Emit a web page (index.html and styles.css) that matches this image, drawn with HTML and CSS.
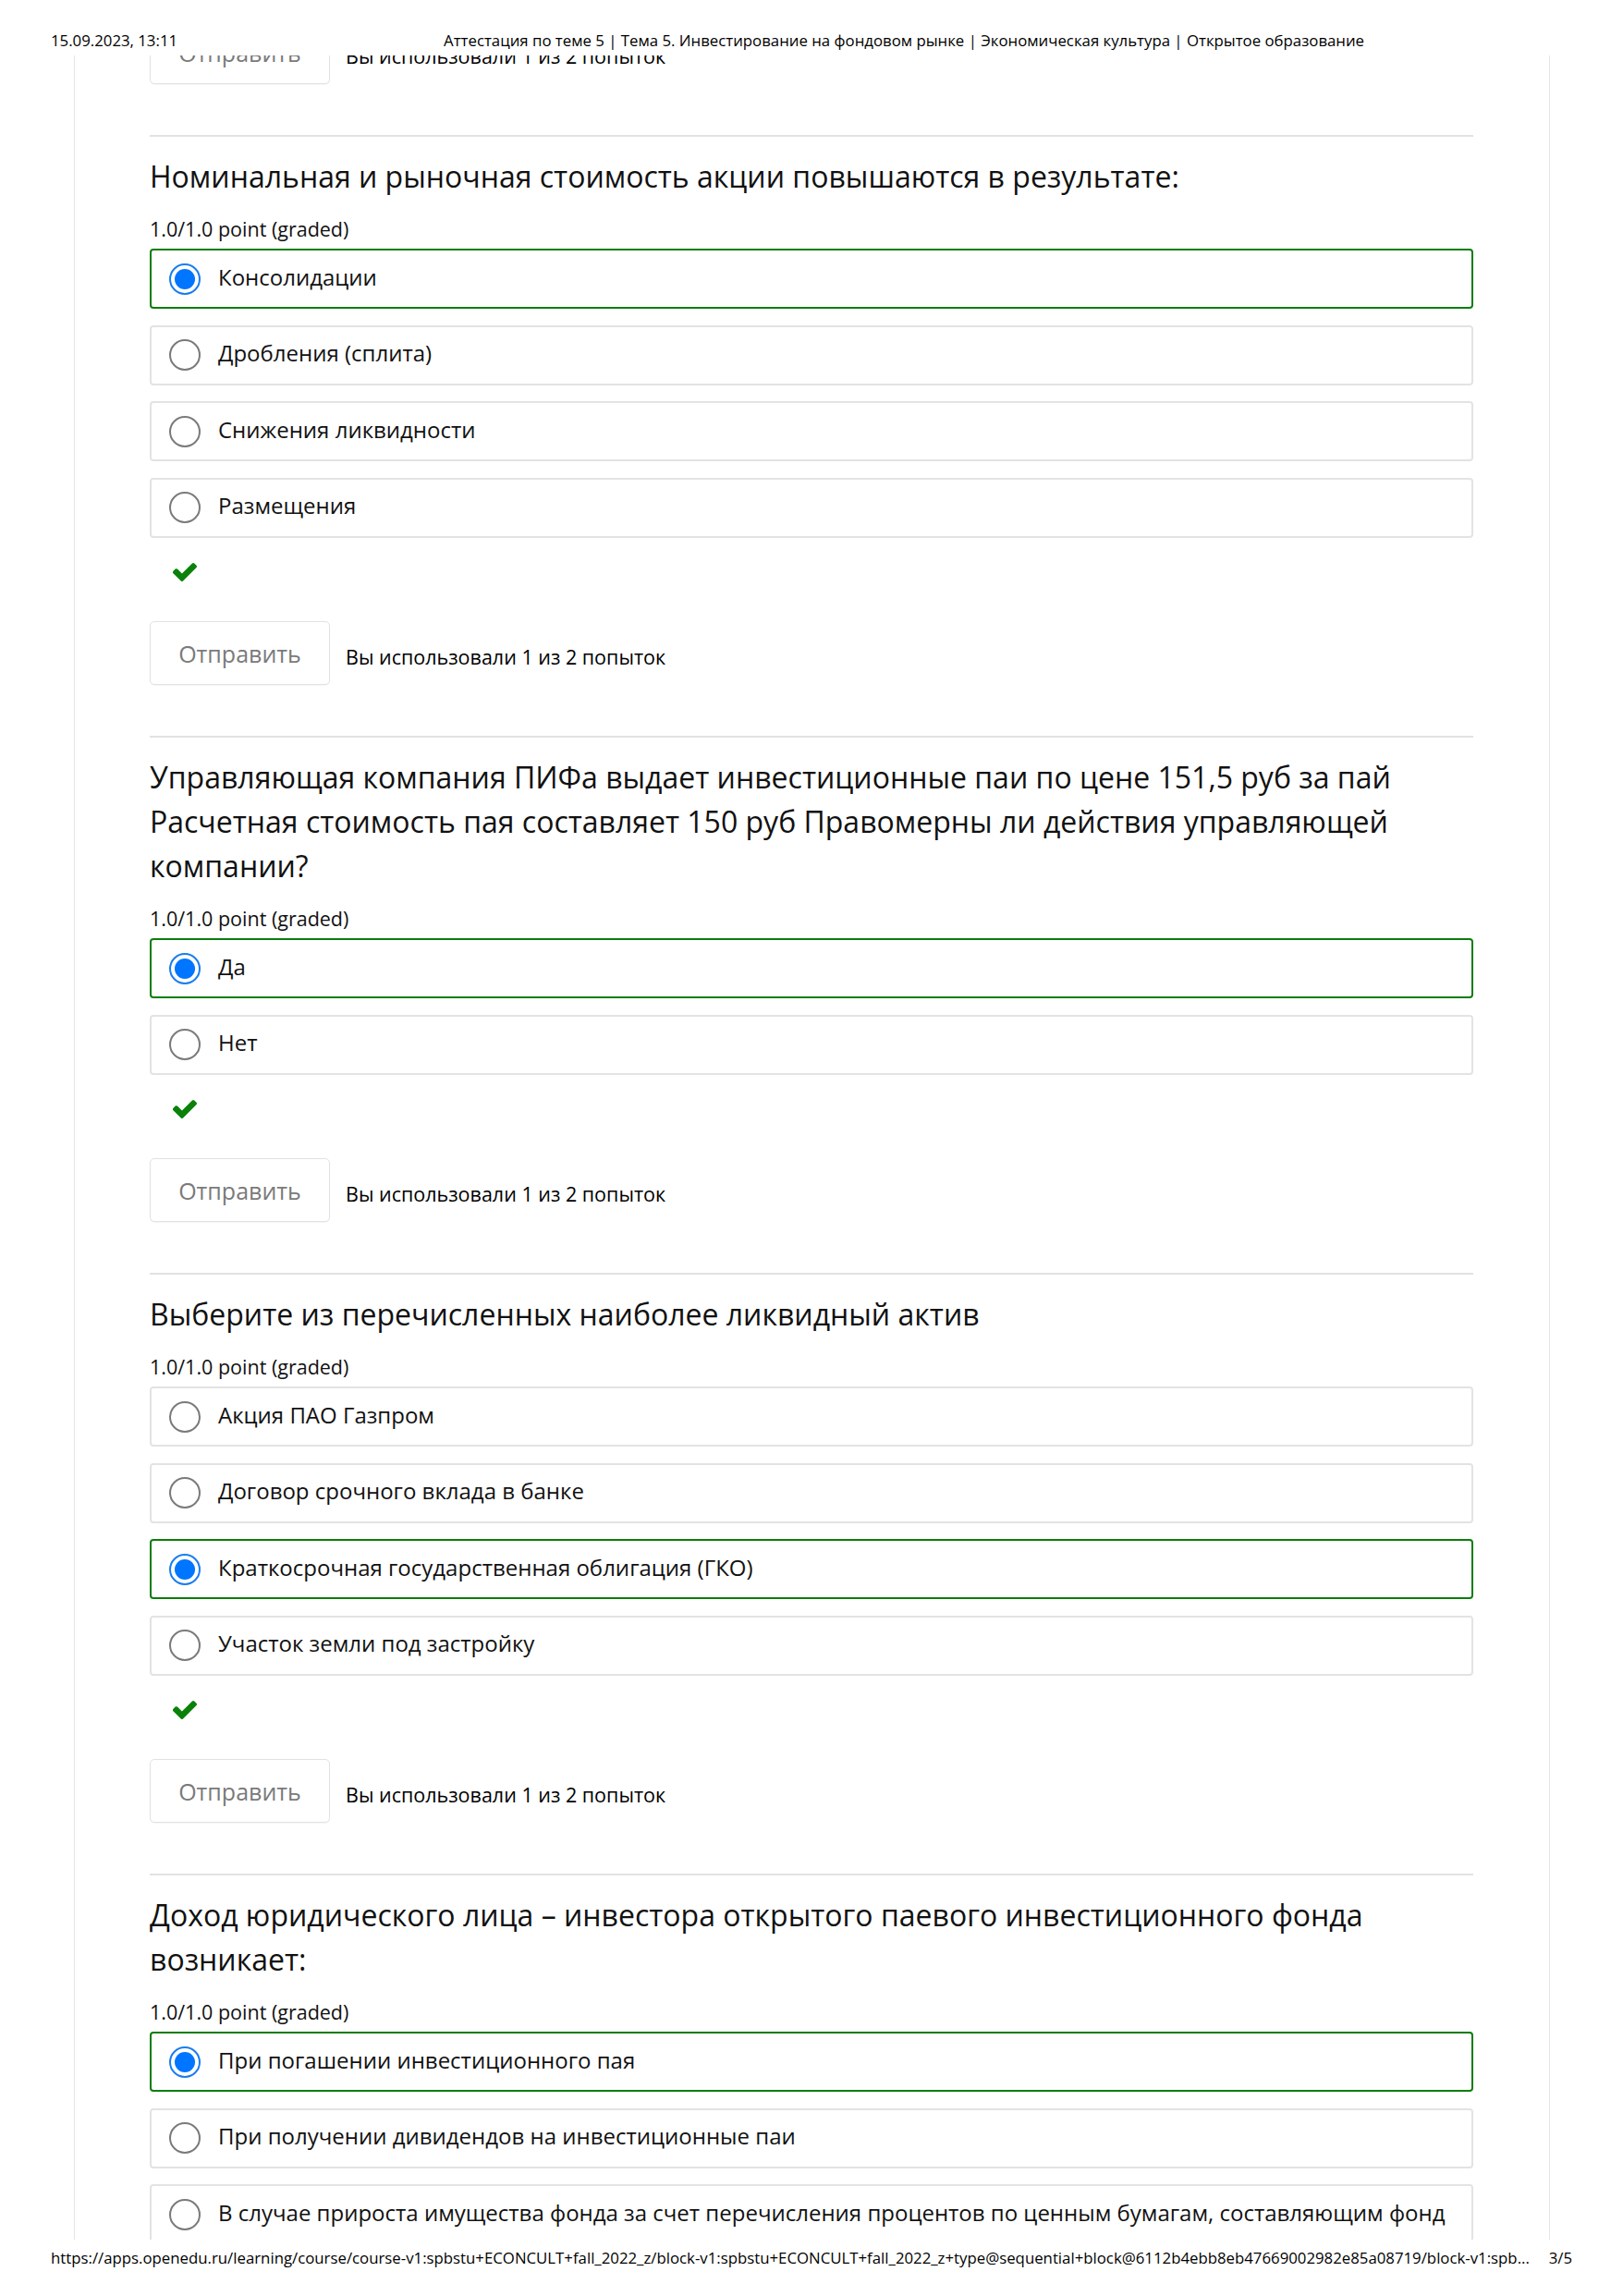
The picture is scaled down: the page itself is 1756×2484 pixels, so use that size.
FILE: index.html
```html
<!DOCTYPE html>
<html lang="ru">
<head>
<meta charset="utf-8">
<title>Аттестация по теме 5</title>
<link rel="stylesheet" href="styles.css">
</head>
<body>
<header class="print-head">
  <span class="print-date">15.09.2023, 13:11</span>
  <span class="print-title">Аттестация по теме 5 | Тема 5. Инвестирование на фондовом рынке | Экономическая культура | Открытое образование</span>
</header>

<main class="column">
  <div class="column-inner">
    <div class="actions actions-partial">
      <button class="submit" type="button">Отправить</button>
      <span class="attempts">Вы использовали 1 из 2 попыток</span>
    </div>

    <section class="problem">
      <h2 class="q-title">Номинальная и рыночная стоимость акции повышаются в результате:</h2>
      <div class="points">1.0/1.0 point (graded)</div>
      <div class="options">
        <div class="option correct"><span class="radio checked"></span><span class="opt-text">Консолидации</span></div>
        <div class="option"><span class="radio"></span><span class="opt-text">Дробления (сплита)</span></div>
        <div class="option"><span class="radio"></span><span class="opt-text">Снижения ликвидности</span></div>
        <div class="option"><span class="radio"></span><span class="opt-text">Размещения</span></div>
      </div>
      <div class="status"><svg class="check" viewBox="128 420 1543 1010" aria-hidden="true"><path d="M1671 566q0 40-28 68l-724 724-136 136q-28 28-68 28t-68-28l-136-136-362-362q-28-28-28-68t28-68l136-136q28-28 68-28t68 28l294 295 656-657q28-28 68-28t68 28l136 136q28 28 28 68z"/></svg></div>
      <div class="actions">
        <button class="submit" type="button">Отправить</button>
        <span class="attempts">Вы использовали 1 из 2 попыток</span>
      </div>
    </section>

    <section class="problem">
      <h2 class="q-title">Управляющая компания ПИФа выдает инвестиционные паи по цене 151,5 руб за пай<br>Расчетная стоимость пая составляет 150 руб Правомерны ли действия управляющей<br>компании?</h2>
      <div class="points">1.0/1.0 point (graded)</div>
      <div class="options">
        <div class="option correct"><span class="radio checked"></span><span class="opt-text">Да</span></div>
        <div class="option"><span class="radio"></span><span class="opt-text">Нет</span></div>
      </div>
      <div class="status"><svg class="check" viewBox="128 420 1543 1010" aria-hidden="true"><path d="M1671 566q0 40-28 68l-724 724-136 136q-28 28-68 28t-68-28l-136-136-362-362q-28-28-28-68t28-68l136-136q28-28 68-28t68 28l294 295 656-657q28-28 68-28t68 28l136 136q28 28 28 68z"/></svg></div>
      <div class="actions">
        <button class="submit" type="button">Отправить</button>
        <span class="attempts">Вы использовали 1 из 2 попыток</span>
      </div>
    </section>

    <section class="problem">
      <h2 class="q-title">Выберите из перечисленных наиболее ликвидный актив</h2>
      <div class="points">1.0/1.0 point (graded)</div>
      <div class="options">
        <div class="option"><span class="radio"></span><span class="opt-text">Акция ПАО Газпром</span></div>
        <div class="option"><span class="radio"></span><span class="opt-text">Договор срочного вклада в банке</span></div>
        <div class="option correct"><span class="radio checked"></span><span class="opt-text">Краткосрочная государственная облигация (ГКО)</span></div>
        <div class="option"><span class="radio"></span><span class="opt-text">Участок земли под застройку</span></div>
      </div>
      <div class="status"><svg class="check" viewBox="128 420 1543 1010" aria-hidden="true"><path d="M1671 566q0 40-28 68l-724 724-136 136q-28 28-68 28t-68-28l-136-136-362-362q-28-28-28-68t28-68l136-136q28-28 68-28t68 28l294 295 656-657q28-28 68-28t68 28l136 136q28 28 28 68z"/></svg></div>
      <div class="actions">
        <button class="submit" type="button">Отправить</button>
        <span class="attempts">Вы использовали 1 из 2 попыток</span>
      </div>
    </section>

    <section class="problem">
      <h2 class="q-title">Доход юридического лица – инвестора открытого паевого инвестиционного фонда<br>возникает:</h2>
      <div class="points">1.0/1.0 point (graded)</div>
      <div class="options">
        <div class="option correct"><span class="radio checked"></span><span class="opt-text">При погашении инвестиционного пая</span></div>
        <div class="option"><span class="radio"></span><span class="opt-text">При получении дивидендов на инвестиционные паи</span></div>
        <div class="option"><span class="radio"></span><span class="opt-text">В случае прироста имущества фонда за счет перечисления процентов по ценным бумагам, составляющим фонд</span></div>
      </div>
    </section>
  </div>
</main>

<footer class="print-foot">
  <span class="print-url">https://apps.openedu.ru/learning/course/course-v1:spbstu+ECONCULT+fall_2022_z/block-v1:spbstu+ECONCULT+fall_2022_z+type@sequential+block@6112b4ebb8eb47669002982e85a08719/block-v1:spb...</span>
  <span class="print-page">3/5</span>
</footer>
</body>
</html>
```

FILE: styles.css
```css
* { box-sizing: border-box; }

html, body {
  margin: 0;
  padding: 0;
  background: #ffffff;
}

body {
  width: 1756px;
  height: 2484px;
  overflow: hidden;
  font-family: "Open Sans", "Noto Sans", sans-serif;
  color: #111111;
}

/* print header / footer */
.print-head {
  height: 60px;
  display: flex;
  align-items: flex-end;
  padding: 0 0 5px 55px;
  font-size: 16.8px;
  line-height: 22px;
  color: #000;
}
.print-title {
  margin-left: 288px;
}

.print-foot {
  height: 61px;
  display: flex;
  align-items: flex-start;
  justify-content: space-between;
  padding: 9px 55px 0 55px;
  font-size: 16.8px;
  line-height: 22px;
  color: #000;
}

/* main column */
.column {
  margin-left: 80px;
  width: 1597px;
  height: 2363px;
  border-left: 1px solid #e6e6e6;
  border-right: 1px solid #e6e6e6;
  overflow: hidden;
}
.column-inner {
  padding: 0 82px 0 81px;
}

.problem {
  margin-top: 55px;
  border-top: 2px solid #e2e2e2;
  padding-top: 19px;
}

.q-title {
  margin: 0;
  font-size: 32px;
  line-height: 48px;
  font-weight: 400;
  color: #111;
}

.points {
  margin-top: 18px;
  font-size: 21.5px;
  line-height: 30px;
  color: #111;
}

.options {
  margin-top: 6px;
}

.option {
  height: 65px;
  margin-bottom: 17.5px;
  border: 2px solid #e3e3e3;
  border-radius: 4px;
  display: flex;
  align-items: center;
  padding-left: 19px;
}
.option.correct {
  border-color: #0b7d0b;
}

.radio {
  width: 34px;
  height: 34px;
  flex: none;
  border-radius: 50%;
  border: 2px solid #7a7a7a;
  background: #fff;
  position: relative;
}
.radio.checked {
  border: 2px solid #1a7cf0;
}
.radio.checked::after {
  content: "";
  position: absolute;
  left: 4px;
  top: 4px;
  width: 22px;
  height: 22px;
  border-radius: 50%;
  background: #0075ff;
}

.opt-text {
  margin-left: 19px;
  font-size: 24px;
  line-height: 30px;
  color: #111;
  margin-top: -4px;
}

.status {
  height: 40px;
  padding-left: 25px;
  display: flex;
  align-items: center;
}
.check {
  width: 26px;
  height: 20px;
  fill: #0a820a;
}

.actions {
  margin-top: 33px;
  display: flex;
  align-items: center;
}
.actions.actions-partial {
  margin-top: -38px;
}
.submit {
  width: 195px;
  height: 69px;
  border: 1px solid #e2e2e2;
  border-radius: 5px;
  background: #fff;
  font-family: inherit;
  font-size: 25px;
  color: #7a7a7a;
  padding: 0;
  margin: 0;
  box-shadow: 0 1px 1px rgba(0,0,0,0.04);
}
.attempts {
  margin-left: 17px;
  font-size: 21.5px;
  line-height: 30px;
  padding-top: 9px;
  color: #000;
}
```
